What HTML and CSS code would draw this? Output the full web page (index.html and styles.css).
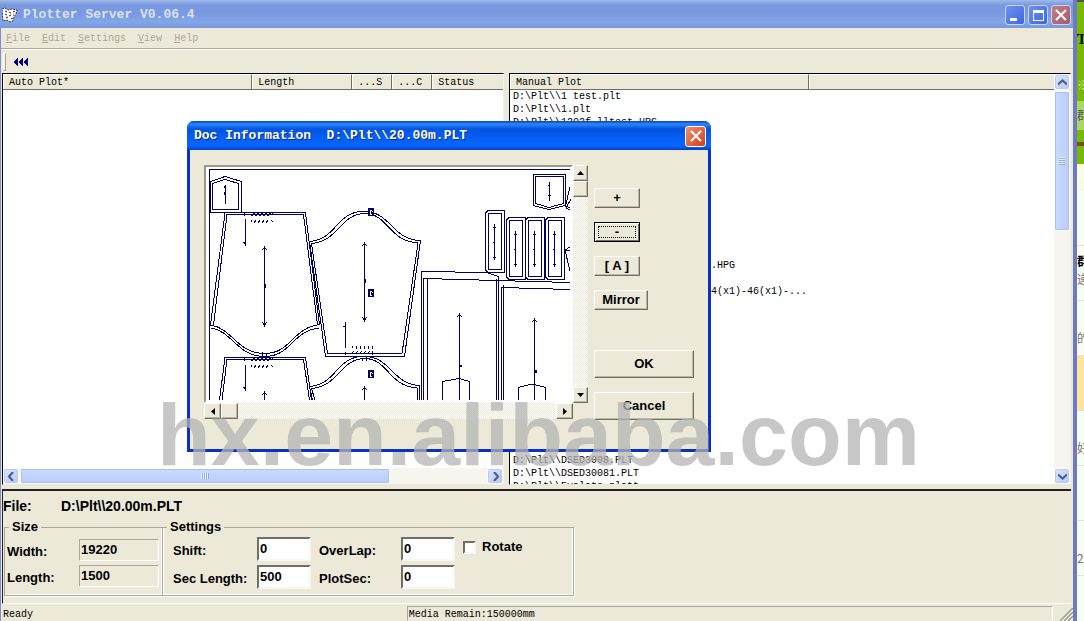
FILE: index.html
```
<!DOCTYPE html>
<html lang="en">
<head>
<meta charset="utf-8">
<meta name="viewport" content="width=device-width, initial-scale=1">
<title>Plotter Server V0.06.4</title>
<link rel="stylesheet" href="styles.css">
</head>
<body>
<div class="desktop">
  <main class="window">
    <header class="titlebar">
      <svg class="app-icon" width="16" height="16" viewBox="0 0 16 16"><path d="M0 2l3-1 3 2 4-1 5 1-1 4-2 3-1 4-3 1-3-2-4 1z" fill="#fff" stroke="#334" stroke-dasharray="2 1"/><path d="M3 4l2 1M7 5l2 1M11 5l2-1M3 7l2 1M7 9l2-1M4 11l2-1M9 12l2-1M11 8h1" stroke="#322" stroke-width="1"/></svg>
      <h1 class="title">Plotter Server V0.06.4</h1>
      <div class="caption-buttons">
        <button class="cap" aria-label="Minimize"><svg width="18" height="18" viewBox="0 0 18 18"><path d="M4 12h7v3H4z" fill="#fff"/></svg></button>
        <button class="cap" aria-label="Maximize"><svg width="18" height="18" viewBox="0 0 18 18"><path fill="#fff" fill-rule="evenodd" d="M4 4h11v11H4zM5 7v7h9V7z"/></svg></button>
        <button class="cap cap-close" aria-label="Close"><svg width="18" height="18" viewBox="0 0 18 18"><path d="M4 4l10 10M14 4L4 14" stroke="#fff" stroke-width="2"/></svg></button>
      </div>
    </header>

    <div class="client">
      <nav class="menubar">
        <button class="menu" disabled><u>F</u>ile</button>
        <button class="menu" disabled><u>E</u>dit</button>
        <button class="menu" disabled><u>S</u>ettings</button>
        <button class="menu" disabled><u>V</u>iew</button>
        <button class="menu" disabled><u>H</u>elp</button>
      </nav>
      <div class="toolbar">
        <span class="grip"></span>
        <button class="tool" aria-label="Rewind"><svg width="16" height="10" viewBox="0 0 16 10" shape-rendering="crispEdges"><path d="M0 5l5-5v10zM5 5l5-5v10zM10 5l5-5v10z" fill="#000080"/></svg></button>
      </div>

      <div class="panes">
        <section class="pane">
          <div class="columns auto-columns">
            <span class="col">Auto Plot*</span><span class="col">Length</span><span class="col">...S</span><span class="col">...C</span><span class="col">Status</span>
          </div>
          <div class="auto-body"></div>
          <div class="hscroll">
            <button class="xp-arrow" aria-label="Scroll left"><svg width="9" height="9" viewBox="0 0 9 9"><path d="M6 0L2 4.500l4 4.500" fill="none" stroke="#4d6185" stroke-width="2.200"/></svg></button>
            <div class="htrack"><div class="hthumb"><span class="ridges"></span></div></div>
            <button class="xp-arrow" aria-label="Scroll right"><svg width="9" height="9" viewBox="0 0 9 9"><path d="M3 0l4 4.500L3 9" fill="none" stroke="#4d6185" stroke-width="2.200"/></svg></button>
          </div>
        </section>
        <section class="pane manual">
          <div class="manual-main">
            <div class="columns manual-columns"><span class="col">Manual Plot</span><span class="col"></span></div>
            <ul class="files">
              <li class="r1">D:\Plt\\1 test.plt</li>
              <li class="r2">D:\Plt\\1.plt</li>
              <li class="r3">D:\Plt\\1202f_lltest.HPG</li>
              <li class="r14 tail">.HPG</li>
              <li class="r16 tail">4(x1)-46(x1)-...</li>
              <li class="r29">D:\Plt\\DSED3008.PLT</li>
              <li class="r30">D:\Plt\\DSED30081.PLT</li>
              <li class="r31">D:\Plt\\Evalate.platt</li>
            </ul>
          </div>
          <div class="vscroll">
            <button class="xp-arrow" aria-label="Scroll up"><svg width="9" height="9" viewBox="0 0 9 9"><path d="M0 6.500l4.500-4 4.500 4" fill="none" stroke="#4d6185" stroke-width="2.200"/></svg></button>
            <div class="vtrack"><div class="vthumb"><span class="ridges"></span></div></div>
            <button class="xp-arrow" aria-label="Scroll down"><svg width="9" height="9" viewBox="0 0 9 9"><path d="M0 2.500l4.500 4 4.500-4" fill="none" stroke="#4d6185" stroke-width="2.200"/></svg></button>
          </div>
        </section>
      </div>

      <form class="details">
        <p class="file-line"><span class="file-label">File:</span><span>D:\Plt\\20.00m.PLT</span></p>
        <div class="groups">
          <fieldset class="group size-group">
            <legend>Size</legend>
            <label for="width">Width:</label><input id="width" class="readonly" value="19220" readonly>
            <label for="length">Length:</label><input id="length" class="readonly" value="1500" readonly>
          </fieldset>
          <fieldset class="group settings-group">
            <legend>Settings</legend>
            <label for="shift">Shift:</label><input id="shift" value="0">
            <label for="overlap">OverLap:</label><input id="overlap" value="0">
            <div class="check"><input type="checkbox" id="rotate"><label for="rotate">Rotate</label></div>
            <label for="seclen">Sec Length:</label><input id="seclen" value="500">
            <label for="plotsec">PlotSec:</label><input id="plotsec" value="0">
          </fieldset>
        </div>
      </form>

      <footer class="status">
        <span class="status-ready">Ready</span>
        <span class="status-media">Media Remain:150000mm</span>
        <svg class="sizegrip" width="13" height="13" viewBox="0 0 13 13"><path d="M0 13L13 0M4 13l9-9M8 13l5-5" stroke="#9d9a89" stroke-width="1.500"/><path d="M2 13L13 2M6 13l7-7M10 13l3-3" stroke="#fff"/></svg>
      </footer>
    </div>
  </main>

  <aside class="behind">
    <div class="b-green">T</div>
    <div class="b-leaf">※</div>
    <div class="b-tab">群</div>
    <div class="b-base"></div>
    <div class="b-fade"></div>
    <div class="b-row"></div>
    <div class="b-row"><b>群</b><br>递</div>
    <div class="b-row">的</div>
    <div class="b-row b-picked"></div>
    <div class="b-row">好</div>
    <div class="b-row"></div>
    <div class="b-row">2:</div>
    <div class="b-row"></div>
  </aside>

  <section class="dialog" role="dialog" aria-labelledby="dlg-title">
    <header class="dialog-title">
      <h2 id="dlg-title" class="title">Doc Information&nbsp; D:\Plt\\20.00m.PLT</h2>
      <button class="cap dialog-close" aria-label="Close"><svg width="18" height="18" viewBox="0 0 18 18"><path d="M4 4l10 10M14 4L4 14" stroke="#fff" stroke-width="2"/></svg></button>
    </header>
    <div class="dialog-body">
      <div class="viewer">
        <div class="canvas">
          <svg viewBox="206 167 366 235" width="366" height="235" shape-rendering="crispEdges" fill="none" stroke="#000064">
            <defs>
              <g id="strip"><path d="M3 .5H19.500V62.500H3L.5 60V3zM4 3H16.500V59.500H4L3 58V5z"/><path d="M9.500 14V50M8 17h3M8 47h3M8 32h2"/></g>
              <g id="mark"><path d="M-2.500-3.500h5v7h-5z" fill="#000064"/><path d="M-1-2h2M-1-2v4M1-1v1M-1 2h2M-1 0h1" stroke="#fff"/></g>
              <g id="ticks"><path d="M.5 8v2M4.500 8l-1 3M8.500 8l-1 3M12.500 8l-1 3M16.500 8l-1 3M20.500 8l1 2M-6.500 0v4M.5 4l3-3M4.500 4l3-3M8.500 4l3-3M12.500 4l3-3M16.500 4l3-3M21 0v3"/></g>
            </defs>
            <path d="M570 169.500H209.500V400"/>
            <path d="M210.500 212V181.500L225 176.500 241.500 181.500V212M212.500 183.500L225 179.500 238.500 183.500V209.500H212.500z"/>
            <path d="M225.500 185V204M224.500 188v-2M224.500 192v3"/>
            <path d="M209 212.500H305.500L319.500 325M225 213L210.500 325"/>
            <path d="M303.500 214.500H227L213.500 325M303.500 214.500L317.500 325"/>
            <path d="M210.500 325C232 328 237 353 264 353.500S292 328 319.500 324.500M211 328C232 331 237 356 264 356.500S292 331 319 328"/>
            <path d="M245.500 219V246M243.500 242l2 2M264.500 246V327M262.500 250l2-3 2 3M262.500 322l2 4 2-4"/>
            <path d="M264.500 284v4" stroke-width="2"/>
            <use href="#ticks" x="251" y="212"/><use href="#ticks" x="251" y="357"/>
            <path d="M219.500 400L225 357.500H305.500L311.500 400M222 400L227 359.500H303.500L309.500 400"/>
            <path d="M245.500 365V391M243.500 387l2 2M264.500 391V400M262.500 395l2-3 2 3M262.500 352v8M266.500 353v7"/>
            <path d="M309.500 241.500C337 239 336 212.500 362 211.500 391 210 391 240 420.500 240.500L404.500 356.500H325.500z"/>
            <path d="M311.500 243.500C339 241 340 214.500 364 213.500 388 213 388 241 418 243L402 353.500H327.500z"/>
            <path d="M364.500 242V321M362.500 246l2-3 2 3M362.500 317l2 4 2-4"/><path d="M364.500 279v4" stroke-width="2"/>
            <path d="M345.500 322V348M343.500 326l2 1"/>
            <path d="M352 346v2M356 346v3M360 346v3M364 346v3M368 346v3M372 346l1 3M345 352v3M351 354l3-3M355 354l3-3M359 354l3-3M363 354l3-3M367 354l3-3M372 351v4M362 358v3M366 357v4"/>
            <path d="M312.500 400L309.500 386.500C337 384 336 357.500 362 356.500 391 355 391 384 419.500 385.500V400M315 400L311.500 388.500C339 386 340 359.500 364 358.500 388 358 388 386 417 388V400"/>
            <path d="M364.500 386V400M362.500 390l2-3 2 3"/>
            <use href="#mark" x="371" y="212"/><use href="#mark" x="371" y="293"/><use href="#mark" x="371" y="374"/>
            <path d="M421.500 400V271.500L487 272.500 498 276.500M423.500 400V278.500L497 280.500M427.500 400V279M496.500 279V400M498.500 276V400M497 280.500L570 282.500M501.500 400V287.500L570 289.500M503.500 400V285"/>
            <path d="M459.500 313V400M457.500 317l2-3 2 3M442.500 400V381.500L459 378.500 469.500 381.500V400M534.500 318V400M532.500 322l2-3 2 3M518.500 400V387.500L532 384 545.500 387.500V400"/>
            <path d="M460.500 365v2M535.500 370v3" stroke-width="2"/>
            <path d="M533.500 174.500H565.500V205.500L549 209.500 533.500 205.500zM535.500 176.500H563.500V203.500L549 207.500 535.500 203.500zM549.500 182V201M548 185h2M548 195h3M570 187L565.500 206 570 208M571 199l-5 9 4 2M570 247l-5 3 5 21M570 251l-5-1"/>
            <use href="#strip" x="485" y="210"/><use href="#strip" x="506" y="217"/><use href="#strip" x="525" y="217"/><use href="#strip" x="545" y="217"/>
          </svg>
        </div>
        <div class="classic-v">
          <button class="classic" aria-label="Scroll up"><svg width="7" height="4"><path d="M0 4L3.500 0 7 4z"/></svg></button>
          <div class="classic thumb"></div><div class="dither"></div>
          <button class="classic" aria-label="Scroll down"><svg width="7" height="4"><path d="M0 0l3.500 4L7 0z"/></svg></button>
        </div>
        <div class="classic-h">
          <button class="classic" aria-label="Scroll left"><svg width="4" height="7"><path d="M4 0L0 3.500 4 7z"/></svg></button>
          <div class="classic thumb"></div><div class="dither"></div>
          <button class="classic" aria-label="Scroll right"><svg width="4" height="7"><path d="M0 0l4 3.500L0 7z"/></svg></button>
        </div>
      </div>
      <div class="actions">
        <button class="btn">+</button>
        <button class="btn focused">-</button>
        <button class="btn">[ A ]</button>
        <button class="btn mirror">Mirror</button>
        <button class="btn wide first">OK</button>
        <button class="btn wide">Cancel</button>
      </div>
    </div>
  </section>
  <div class="watermark">hx.en.alibaba.com</div>
</div>
</body>
</html>
```
FILE: styles.css
```
* { box-sizing: border-box; }
body { margin: 0; background: #ece9d8; color: #000; font: 10px/13px "Liberation Mono", monospace; }
h1, h2, p, ul { margin: 0; padding: 0; }
button { padding: 0; border: 0; background: none; color: inherit; font: inherit; }
svg { display: block; }
.desktop { position: relative; display: flex; height: 100vh; overflow: hidden; }
.window { flex: 1; min-width: 0; display: flex; flex-direction: column; border-right: 4px solid #6d79c4; }
.title { flex: 1; font-size: 13px; line-height: 16px; font-weight: bold; color: #d8e4f8; white-space: nowrap; }

.titlebar { flex: none; height: 28px; display: flex; align-items: center; gap: 5px; padding: 2px 2px 0; background: linear-gradient(#9db9eb 0, #7a98e0 5px, #7b99e1 50%, #82a7e8 22px, #7a96dc 100%); }
.caption-buttons { display: flex; gap: 3px; }
.cap { width: 20px; height: 20px; border: 1px solid #c5d6f7; border-radius: 3px; background: linear-gradient(135deg, #6f92ee, #3c67e0); }
.cap-close { background: linear-gradient(135deg, #c08088, #a85a68); }

.client { flex: 1; min-height: 0; display: flex; flex-direction: column; border-left: 1px solid #7a8fd8; background: #ece9d8; }
.menubar { flex: none; height: 21px; display: flex; align-items: center; gap: 12px; padding: 1px 5px 0; border-bottom: 1px solid #aca899; }
.menu { color: #aca899; }
.toolbar { flex: none; height: 24px; display: flex; align-items: center; gap: 7px; padding: 0 4px 0 2px; border-top: 1px solid #fff; }
.grip { width: 3px; height: 18px; border: 1px solid; border-color: #fff #aca899 #aca899 #fff; }

.panes { flex: 1; min-height: 0; display: grid; grid-template-columns: 502fr 562fr; gap: 5px; padding: 0 2px 0 1px; }
.pane { min-width: 0; min-height: 0; display: flex; flex-direction: column; border: 1px solid; border-color: #000 #f4f2e8 #ece9d8 #000; background: #fff; overflow: hidden; }
.columns { flex: none; display: grid; height: 16px; background: #ece9d8; border-bottom: 1px solid #716f64; }
.auto-columns { grid-template-columns: 250fr 100px 40px 40px 71fr; }
.manual-columns { grid-template-columns: 300fr 245fr; }
.col { padding: 1px 0 0 5px; border-right: 1px solid #716f64; border-left: 1px solid #fff; border-top: 1px solid #fff; }
.col:last-child { border-right: 0; }
.auto-body { flex: 1; }
.hscroll { flex: none; display: flex; height: 16px; background: #f6f5f0; }
.htrack, .vtrack { flex: 1; min-width: 0; }
.xp-arrow { flex: none; width: 16px; height: 16px; display: grid; place-items: center; border: 1px solid #fff; border-radius: 3px; background: linear-gradient(135deg, #dbe6ff, #b3c8f7); box-shadow: inset 0 0 0 1px #b7c9f2; }
.hthumb, .vthumb { display: grid; place-items: center; border: 1px solid #fff; border-radius: 2px; box-shadow: inset 0 0 0 1px #a9c0f5; }
.hthumb { width: 79%; height: 16px; margin-left: 1px; background: linear-gradient(#cbdaff, #b9cdfb); }
.vthumb { height: 37%; margin-top: 1px; background: linear-gradient(90deg, #cbdaff, #b9cdfb); }
.hthumb .ridges { width: 8px; height: 6px; background: repeating-linear-gradient(90deg, #eef4fe 0 1px, #8cabec 1px 2px); }
.vthumb .ridges { width: 6px; height: 8px; background: repeating-linear-gradient(#eef4fe 0 1px, #8cabec 1px 2px); }
.manual { flex-direction: row; }
.manual-main { flex: 1; min-width: 0; display: flex; flex-direction: column; }
.files { flex: 1; min-height: 0; overflow: hidden; display: grid; grid-template-rows: repeat(31, 13px); padding-left: 3px; list-style: none; white-space: pre; }
.r1 { grid-row: 1; } .r2 { grid-row: 2; } .r3 { grid-row: 3; } .r14 { grid-row: 14; }
.r16 { grid-row: 16; } .r29 { grid-row: 29; } .r30 { grid-row: 30; } .r31 { grid-row: 31; }
.tail { padding-left: 198px; }
.vscroll { flex: none; width: 16px; display: flex; flex-direction: column; background: #f6f5f0; }

.details { flex: none; margin: 4px 2px 0 1px; height: 115px; border-top: 2px solid #000; border-top-color: #222; border-bottom: 1px solid #fff; border-left: 1px solid #222; padding-top: 7px; font: bold 13px/16px "Liberation Sans", Arial, sans-serif; }
.file-line { display: flex; font-size: 14px; }
.file-label { width: 58px; }
.groups { display: flex; padding: 5px 0 0 1px; }
.group { margin: 0; min-width: 0; height: 77px; border: 1px solid #aca899; box-shadow: inset -1px -1px #fff, 1px 1px #fff; display: grid; align-content: start; align-items: center; padding: 0; }
.group legend { padding: 0 3px; margin-left: 2px; }
.group > label { padding-top: 4px; }
.size-group { width: 159px; grid-template-columns: 72px 80px; row-gap: 4px; padding-left: 2px; padding-top: 4px; }
.settings-group { width: 412px; margin-left: -1px; grid-template-columns: 76px 54px 74px 54px 1fr; row-gap: 4px; column-gap: 8px; padding-left: 10px; padding-top: 2px; }
.settings-group legend { margin-left: -6px; }
.group input:not([type]) { min-width: 0; width: 100%; height: 24px; padding: 0 1px 2px; border: 2px solid; border-color: #716f64 #f8f7f0 #f8f7f0 #716f64; border-radius: 0; background: #fff; font: inherit; }
.group .readonly:not([type]) { height: 22px; background: transparent; border-width: 1px; border-color: #aca899 #fff #fff #aca899; }
.check { display: flex; gap: 6px; align-items: center; padding-bottom: 4px; }
.check input { appearance: none; width: 13px; height: 13px; margin: 0; background: #fff; border: 2px solid; border-color: #716f64 #f8f7f0 #f8f7f0 #716f64; }

.status { flex: none; height: 17px; display: flex; align-items: flex-end; padding-left: 2px; }
.status-ready { flex: 406; }
.status-media { flex: 646; height: 15px; padding: 1px 1px 0; border: 1px solid; border-color: #aca899 #fff #ece9d8 #aca899; }
.sizegrip { margin-left: 7px; }

.behind { flex: none; width: 7px; overflow: hidden; background: #f7fdf2; color: #777; font: 12px/18px "Noto Sans CJK SC", sans-serif; white-space: nowrap; }
.b-green { height: 76px; padding-top: 29px; border-top: 2px solid #555; background: #76b900; color: #000; font: bold 14px/18px "Liberation Serif", serif; }
.b-leaf { height: 25px; background: #76b900; color: #c5ee8c; }
.b-tab { height: 29px; padding-top: 5px; background: #a8d860; color: #555; }
.b-base { height: 34px; background: linear-gradient(#76b900 12px, #7a4a18 12px 16px, #76b900 16px); }
.b-fade { height: 27px; background: linear-gradient(#fdfde0, #f6fbe0); }
.b-row { height: 55px; padding-top: 6px; border-bottom: 1px solid #dfe6d8; }
.b-row b { color: #000; }
.b-row:nth-child(8), .b-row:nth-child(10), .b-row:nth-child(12) { padding-top: 28px; }
.b-picked { background: #ffe59a; }

.dialog { position: absolute; left: 187px; top: 121px; width: 524px; border: 3px solid #0831c8; border-top: 0; border-radius: 7px 7px 0 0; background: #ece9d8; }
.dialog-title { height: 29px; margin: 0 -3px; display: flex; align-items: center; padding: 1px 5px 0 7px; border-radius: 7px 7px 0 0; background: linear-gradient(#0a3fbe 0, #2f86fb 3px, #0354e0 8px, #0560f5 60%, #0866ff 25px, #0340c0 100%); }
.dialog-title .title { color: #fff; text-shadow: 1px 1px #0a2a80; }
.dialog-close { width: 21px; height: 21px; border-color: #fff; background: linear-gradient(135deg, #ee8f70, #d0401c); }
.dialog-close svg { margin-left: 1px; }
.dialog-body { display: flex; gap: 6px; padding: 15px 14px 29px; }
.viewer { flex: none; display: grid; grid-template-columns: 369px 15px; grid-template-rows: 238px 16px; }
.canvas { overflow: hidden; border: 2px solid; border-color: #99968a #fff #fff #99968a; background: #fff; }
.classic-v, .classic-h { display: flex; }
.classic-v { flex-direction: column; }
.classic { flex: none; width: 15px; height: 16px; display: grid; place-items: center; background: #ece9d8; border: 1px solid; border-color: #fff #716f64 #716f64 #fff; box-shadow: inset -1px -1px #bcb9a8; }
.classic-h .classic { width: 17px; }
.dither { flex: 1; background: repeating-conic-gradient(#fff 0 25%, #ece9d8 0 50%) 0 0 / 2px 2px; }
.actions { display: flex; flex-direction: column; align-items: flex-start; gap: 14px; padding-top: 23px; font: bold 13px/16px "Liberation Sans", Arial, sans-serif; }
.btn { width: 46px; height: 20px; background: #ece9d8; border: 1px solid; border-color: #fff #716f64 #716f64 #fff; box-shadow: inset -1px -1px #bcb9a8; }
.focused { border-color: #000; outline: 1px dotted #000; outline-offset: -5px; box-shadow: inset 1px 1px #fff, inset -1px -1px #716f64; }
.mirror { width: 54px; }
.wide { width: 100px; height: 28px; }
.first { margin-top: 26px; }
.watermark { position: absolute; left: 157px; top: 387px; font: bold 88px/96px "Liberation Sans", Arial, sans-serif; color: rgba(180, 180, 180, .75); pointer-events: none; white-space: nowrap; }
```
